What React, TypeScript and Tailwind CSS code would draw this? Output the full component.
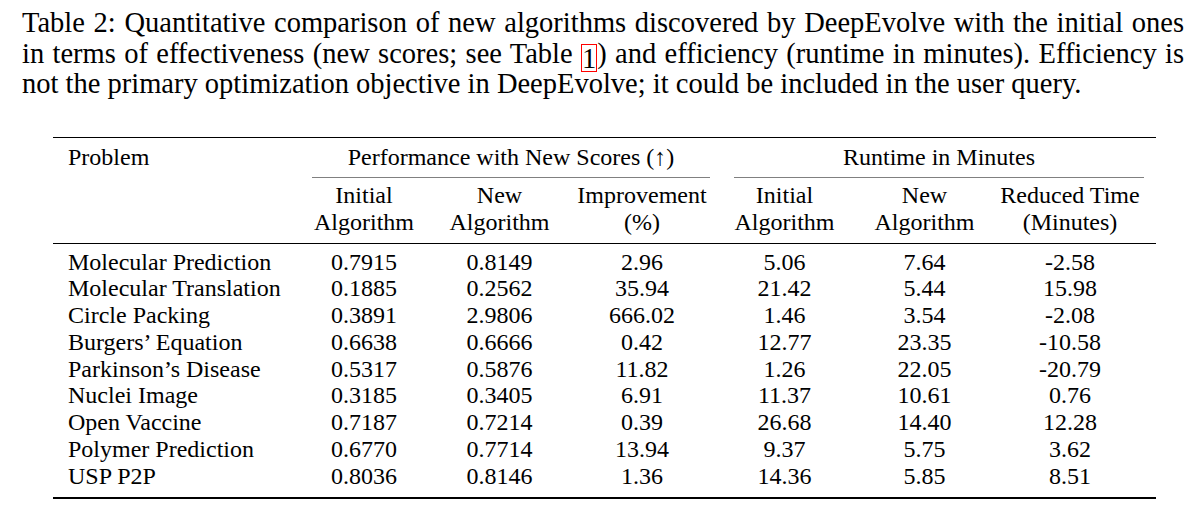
const rows = [
  ["Molecular Prediction", "0.7915", "0.8149", "2.96", "5.06", "7.64", "-2.58"],
  ["Molecular Translation", "0.1885", "0.2562", "35.94", "21.42", "5.44", "15.98"],
  ["Circle Packing", "0.3891", "2.9806", "666.02", "1.46", "3.54", "-2.08"],
  ["Burgers’ Equation", "0.6638", "0.6666", "0.42", "12.77", "23.35", "-10.58"],
  ["Parkinson’s Disease", "0.5317", "0.5876", "11.82", "1.26", "22.05", "-20.79"],
  ["Nuclei Image", "0.3185", "0.3405", "6.91", "11.37", "10.61", "0.76"],
  ["Open Vaccine", "0.7187", "0.7214", "0.39", "26.68", "14.40", "12.28"],
  ["Polymer Prediction", "0.6770", "0.7714", "13.94", "9.37", "5.75", "3.62"],
  ["USP P2P", "0.8036", "0.8146", "1.36", "14.36", "5.85", "8.51"],
];

const subHeads = [
  ["Initial", "Algorithm"],
  ["New", "Algorithm"],
  ["Improvement", "(%)"],
  ["Initial", "Algorithm"],
  ["New", "Algorithm"],
  ["Reduced Time", "(Minutes)"],
];

const GRID = "grid grid-cols-[245px_132px_139px_146px_139px_141px_150px]";

export default function App() {
  return (
    <div className="w-[1200px] h-[506px] overflow-hidden bg-white text-black font-['Liberation_Serif','Times_New_Roman',serif]">
      {/* Caption */}
      <div className="pt-[8px] pl-[22px] w-[1184px] text-[28.5px] leading-[30.5px]">
        <div className="h-[30.5px] whitespace-nowrap [word-spacing:-1px] [text-align-last:justify]">
          Table 2: Quantitative comparison of new algorithms discovered by DeepEvolve with the initial ones
        </div>
        <div className="h-[30.5px] whitespace-nowrap [word-spacing:-1px] [text-align-last:justify]">
          in terms of effectiveness (new scores; see Table{" "}
          <span className="inline-block border border-[#ff0000] h-[28px] leading-[28px] align-[-5px]">1</span>
          ) and efficiency (runtime in minutes). Efficiency is
        </div>
        <div className="h-[30.5px] whitespace-nowrap">
          not the primary optimization objective in DeepEvolve; it could be included in the user query.
        </div>
      </div>

      {/* Table */}
      <div className="mt-[37px] ml-[53px] w-[1103px] text-[24px]">
        <div className="h-[1.5px] bg-black" />

        <div className={`${GRID} mt-[5.5px] leading-[27px]`}>
          <div className="pl-[15px]">Problem</div>
          <div className="col-span-3 text-center pl-[14px] pr-[5px]">Performance with New Scores (↑)</div>
          <div className="col-span-3 text-center pl-[19px] pr-[1px]">Runtime in Minutes</div>
        </div>

        <div className={`${GRID} mt-[6px]`}>
          <div />
          <div className="col-span-3 ml-[14px] mr-[5px] h-[1px] bg-[#808080]" />
          <div className="col-span-3 ml-[19px] mr-[1px] h-[1px] bg-[#808080]" />
        </div>

        <div className={`${GRID} mt-[4px] leading-[27px]`}>
          <div />
          {subHeads.map((h, i) => (
            <div key={i} className="text-center">
              <div>{h[0]}</div>
              <div>{h[1]}</div>
            </div>
          ))}
        </div>

        <div className="mt-[7px] h-[1px] bg-black" />

        <div className="mt-[5px] leading-[26.75px]">
          {rows.map((r) => (
            <div key={r[0]} className={GRID}>
              <div className="pl-[15px]">{r[0]}</div>
              {r.slice(1).map((v, i) => (
                <div key={i} className="text-center">
                  {v}
                </div>
              ))}
            </div>
          ))}
        </div>

        <div className="mt-[8px] h-[2px] bg-black" />
      </div>
    </div>
  );
}
